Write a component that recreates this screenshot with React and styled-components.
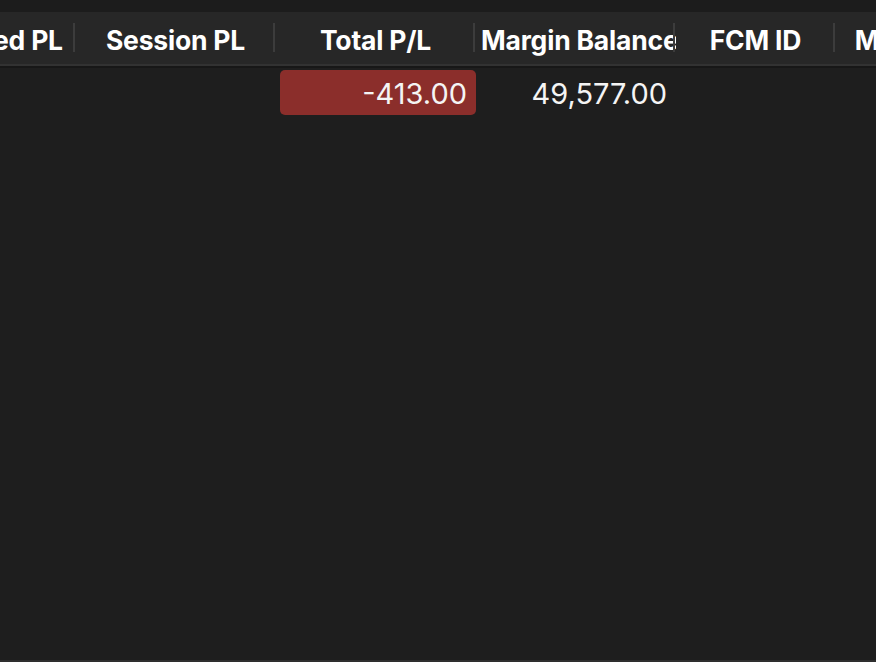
import React from "react";
import styled, { createGlobalStyle } from "styled-components";

const Global = createGlobalStyle`
  html, body { margin: 0; padding: 0; background: #1e1e1e; }
  body { font-family: Inter, "Noto Sans", sans-serif; -webkit-font-smoothing: antialiased; }
  #root { height: 662px; }
`;

const Frame = styled.div`
  width: 876px;
  height: 662px;
  display: flex;
  flex-direction: column;
  background: #1e1e1e;
  overflow: hidden;
  box-sizing: border-box;
  border-bottom: 2px solid #2e2e2e;
`;

const TopStrip = styled.div`
  height: 12px;
  flex: 0 0 12px;
  background: #1c1c1c;
`;

const Viewport = styled.div`
  flex: 1;
  overflow: hidden;
`;

const Table = styled.div`
  margin-left: -124px;
  display: flex;
  flex-direction: column;
  width: max-content;
`;

const HeaderRow = styled.div`
  display: flex;
  height: 52px;
  background: #272727;
  border-bottom: 2px solid #323232;
  box-shadow: 0 2px 0 #171717;
  margin-bottom: 2px;
`;

const HeaderCell = styled.div`
  position: relative;
  width: ${(p) => p.$w}px;
  flex: 0 0 ${(p) => p.$w}px;
  box-sizing: border-box;
  padding: 2px 6px 0 5px;
  line-height: 52px;
  height: 52px;
  text-align: center;
  white-space: nowrap;
  overflow: hidden;
  color: #ffffff;
  font-size: 26.5px;
  font-weight: 700;
  letter-spacing: -0.2px;
  &::after {
    content: "";
    position: absolute;
    right: 1px;
    top: 11px;
    width: 2px;
    height: 29px;
    background: #3c3c3c;
  }
`;

const Label = styled.span``;

const BodyRow = styled.div`
  display: flex;
  height: 50px;
  padding-top: 2px;
`;

const Cell = styled.div`
  width: ${(p) => p.$w}px;
  flex: 0 0 ${(p) => p.$w}px;
  box-sizing: border-box;
  padding-left: 4px;
  display: flex;
`;

const Value = styled.div`
  flex: 1;
  box-sizing: border-box;
  height: 45px;
  padding: 5px 9px 0 0;
  border-radius: 5px;
  background: ${(p) => (p.$negative ? "#8b2e2b" : "transparent")};
  color: #f4f4f4;
  font-size: 29px;
  font-weight: 400;
  line-height: 37px;
  text-align: right;
  white-space: nowrap;
`;

const columns = [
  { key: "upl", title: "Unrealized PL", w: 200 },
  { key: "spl", title: "Session PL", w: 200 },
  { key: "tpl", title: "Total P/L", w: 200 },
  { key: "mb", title: "Margin Balance", w: 200 },
  { key: "fcm", title: "FCM ID", w: 160 },
  { key: "mu", title: "Margin Used", w: 200 },
];

const row = { upl: "", spl: "", tpl: "-413.00", mb: "49,577.00", fcm: "", mu: "" };

export default function App() {
  return (
    <>
      <Global />
      <Frame>
        <TopStrip />
        <Viewport>
          <Table>
            <HeaderRow>
              {columns.map((c) => (
                <HeaderCell key={c.key} $w={c.w}>
                  <Label>{c.title}</Label>
                </HeaderCell>
              ))}
            </HeaderRow>
            <BodyRow>
              {columns.map((c) => (
                <Cell key={c.key} $w={c.w}>
                  <Value $negative={row[c.key].startsWith("-")}>{row[c.key]}</Value>
                </Cell>
              ))}
            </BodyRow>
          </Table>
        </Viewport>
      </Frame>
    </>
  );
}
